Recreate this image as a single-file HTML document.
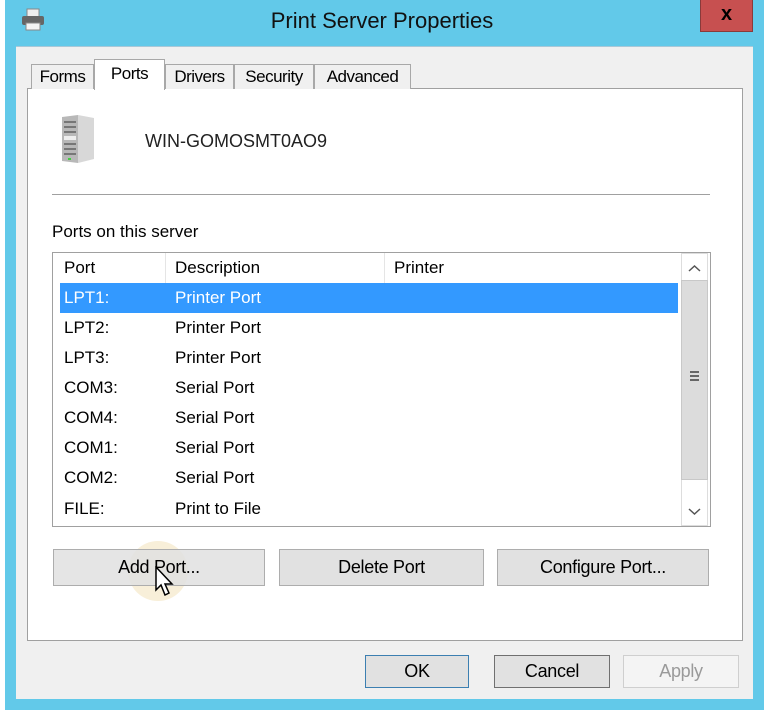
<!DOCTYPE html>
<html><head><meta charset="utf-8"><style>
*{box-sizing:border-box;margin:0;padding:0}
body{width:764px;height:714px;background:#fff;position:relative;overflow:hidden;font-family:"Liberation Sans",sans-serif;color:#000}
.a{position:absolute}
.win{left:5px;top:0;width:759px;height:710px;background:#62c9e9}
.dlg{left:16px;top:46px;width:737px;height:653px;background:#f0f0f0;border-top:1px solid #a8c8d8}
.panel{left:27px;top:88px;width:716px;height:553px;background:#fff;border:1px solid #a0a0a0}
.tab{top:64px;height:25px;background:#f0f0f0;border:1px solid #a8a8a8;border-bottom:none;font-size:17px;text-align:center;line-height:24px;letter-spacing:-0.5px}
.btn{background:#e1e1e1;border:1px solid #adadad;font-size:18px;text-align:center;letter-spacing:-0.3px}
.row{left:56px;width:622px;height:30px;font-size:17px;line-height:30px}
.row span{position:absolute;top:0}
</style></head><body>
<div class="a win"></div>
<svg class="a" style="left:20px;top:8px" width="26" height="24" viewBox="0 0 26 24"><rect x="7" y="1" width="12" height="8" fill="#eee" stroke="#888"/><rect x="2" y="8" width="22" height="9" rx="2" fill="#666"/><rect x="6" y="15" width="14" height="7" fill="#f4f4f4" stroke="#888"/></svg>
<div class="a" style="left:0;width:764px;top:8px;text-align:center;font-size:22px;color:#111">Print Server Properties</div>
<div class="a" style="left:700px;top:0;width:53px;height:32px;background:#c75050;border:1px solid #8a3a3a;border-top:none;color:#000;font-weight:bold;font-size:20px;text-align:center;line-height:28px">x</div>
<div class="a dlg"></div>
<div class="a panel"></div>
<div class="a tab" style="left:31px;width:63px">Forms</div>
<div class="a tab" style="left:94px;top:59px;width:71px;height:31px;background:#fff;line-height:28px;z-index:2">Ports</div>
<div class="a tab" style="left:165px;width:69px">Drivers</div>
<div class="a tab" style="left:234px;width:80px">Security</div>
<div class="a tab" style="left:314px;width:97px">Advanced</div>
<svg class="a" style="left:60px;top:113px" width="36" height="52" viewBox="0 0 36 52"><polygon points="2,4 18,2 18,50 2,48" fill="#b8b8b8"/><polygon points="18,2 34,5 34,46 18,50" fill="#d8d8d8"/><g fill="#777"><rect x="4" y="8" width="12" height="2"/><rect x="4" y="13" width="12" height="2"/><rect x="4" y="18" width="12" height="2"/><rect x="4" y="23" width="12" height="4" fill="#eee"/><rect x="4" y="30" width="12" height="2"/><rect x="4" y="35" width="12" height="2"/><rect x="4" y="40" width="12" height="2"/></g><rect x="8" y="45" width="3" height="2" fill="#4c4"/></svg>
<div class="a" style="left:145px;top:131px;font-size:18px;color:#222">WIN-GOMOSMT0AO9</div>
<div class="a" style="left:52px;top:194px;width:658px;height:1px;background:#a0a0a0"></div>
<div class="a" style="left:52px;top:222px;font-size:17px">Ports on this server</div>
<div class="a" style="left:52px;top:252px;width:659px;height:275px;border:1px solid #a0a0a0;background:#fff"></div>
<div class="a" style="left:53px;top:253px;width:628px;height:30px;background:#fff;font-size:17px;line-height:30px">
<span class="a" style="left:11px">Port</span><span class="a" style="left:112px;top:0;width:1px;height:30px;background:#e5e5e5"></span>
<span class="a" style="left:122px">Description</span><span class="a" style="left:331px;top:0;width:1px;height:30px;background:#e5e5e5"></span>
<span class="a" style="left:341px">Printer</span></div>
<div class="a row" style="top:283px;background:#3399ff;color:#fff;left:60px;width:618px"><span style="left:4px">LPT1:</span><span style="left:115px">Printer Port</span></div>
<div class="a row" style="top:313px"><span style="left:8px">LPT2:</span><span style="left:119px">Printer Port</span></div>
<div class="a row" style="top:343px"><span style="left:8px">LPT3:</span><span style="left:119px">Printer Port</span></div>
<div class="a row" style="top:373px"><span style="left:8px">COM3:</span><span style="left:119px">Serial Port</span></div>
<div class="a row" style="top:403px"><span style="left:8px">COM4:</span><span style="left:119px">Serial Port</span></div>
<div class="a row" style="top:433px"><span style="left:8px">COM1:</span><span style="left:119px">Serial Port</span></div>
<div class="a row" style="top:463px"><span style="left:8px">COM2:</span><span style="left:119px">Serial Port</span></div>
<div class="a row" style="top:494px"><span style="left:8px">FILE:</span><span style="left:119px">Print to File</span></div>
<div class="a" style="left:681px;top:253px;width:27px;height:273px;background:#fff;border:1px solid #ddd"></div>
<div class="a" style="left:681px;top:280px;width:27px;height:200px;background:#dcdcdc;border:1px solid #c8c8c8"></div>
<svg class="a" style="left:681px;top:253px" width="27" height="273"><polyline points="8,18 13.5,13 19,18" fill="none" stroke="#555" stroke-width="1.5"/><polyline points="8,256 13.5,261 19,256" fill="none" stroke="#555" stroke-width="1.5"/><g fill="#666"><rect x="9" y="118" width="9" height="2"/><rect x="9" y="122" width="9" height="2"/><rect x="9" y="126" width="9" height="2"/></g></svg>
<div class="a" style="left:128px;top:541px;width:60px;height:60px;border-radius:50%;background:rgba(240,220,170,0.45)"></div>
<div class="a btn" style="left:53px;top:549px;width:212px;height:37px;line-height:35px;background:rgba(225,225,225,0.85)">Add Port...</div>
<div class="a btn" style="left:279px;top:549px;width:205px;height:37px;line-height:35px">Delete Port</div>
<div class="a btn" style="left:497px;top:549px;width:212px;height:37px;line-height:35px">Configure Port...</div>
<svg class="a" style="left:155px;top:566px" width="22" height="34" viewBox="0 0 22 34"><path d="M1,1 L1,24 L6,19 L10,29 L14,27 L10,18 L17,18 Z" fill="#fff" stroke="#000" stroke-width="1.5"/></svg>
<div class="a btn" style="left:365px;top:655px;width:104px;height:33px;line-height:31px;border-color:#3c7fb1">OK</div>
<div class="a btn" style="left:494px;top:655px;width:116px;height:33px;line-height:31px;border-color:#707070">Cancel</div>
<div class="a btn" style="left:623px;top:655px;width:116px;height:33px;line-height:31px;background:#f4f4f4;border-color:#cfcfcf;color:#9a9a9a">Apply</div>
</body></html>
